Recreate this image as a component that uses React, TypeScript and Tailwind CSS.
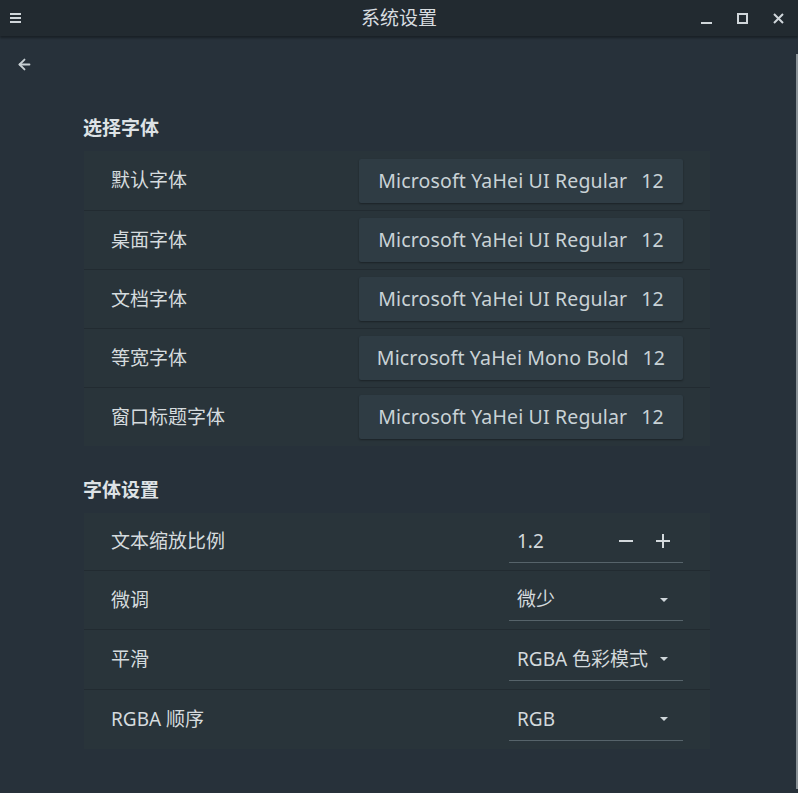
import { ArrowLeft } from "lucide-react";

const fontRows = [
  { label: "默认字体", value: "Microsoft YaHei UI Regular", size: 12 },
  { label: "桌面字体", value: "Microsoft YaHei UI Regular", size: 12 },
  { label: "文档字体", value: "Microsoft YaHei UI Regular", size: 12 },
  { label: "等宽字体", value: "Microsoft YaHei Mono Bold", size: 12 },
  { label: "窗口标题字体", value: "Microsoft YaHei UI Regular", size: 12 },
];

const font = "font-['Noto_Sans','Noto_Sans_CJK_SC',sans-serif]";

function Caret() {
  return (
    <svg width="10" height="6" viewBox="0 0 10 6" className="shrink-0">
      <path d="M1 1h8L5 5z" fill="#cfd6da" />
    </svg>
  );
}

function Select({ value }: { value: string }) {
  return (
    <div className="w-[174px] h-[42px] flex items-center justify-between pl-[8px] pr-[14px] border-b border-[#56636a] text-[19px] text-[#d3d9dc]">
      <span>{value}</span>
      <Caret />
    </div>
  );
}

export default function App() {
  return (
    <div className={`w-[798px] h-[793px] bg-[#27313a] flex flex-col overflow-hidden ${font}`}>
      {/* title bar */}
      <div className="h-[36px] shrink-0 bg-[#222a30] shadow-[0_2px_2px_rgba(0,0,0,0.35)] grid grid-cols-[1fr_auto_1fr] items-center relative z-10">
        <div className="pl-[10px]">
          <svg width="11" height="10" viewBox="0 0 11 10">
            <path d="M0 1h11M0 5h11M0 9h11" stroke="#d0d6da" strokeWidth="2" />
          </svg>
        </div>
        <div className="text-[19px] text-[#d8dde0]">系统设置</div>
        <div className="flex items-center justify-end pr-[2px]">
          <div className="w-[36px] h-[36px] flex items-center justify-center">
            <svg width="11" height="12" viewBox="0 0 11 12">
              <path d="M0 11h11" stroke="#d0d6da" strokeWidth="2" />
            </svg>
          </div>
          <div className="w-[36px] h-[36px] flex items-center justify-center">
            <svg width="11" height="11" viewBox="0 0 11 11">
              <rect x="1" y="1" width="9" height="9" fill="none" stroke="#d0d6da" strokeWidth="2" />
            </svg>
          </div>
          <div className="w-[36px] h-[36px] flex items-center justify-center">
            <svg width="11" height="11" viewBox="0 0 11 11">
              <path d="M1 1l9 9M10 1l-9 9" stroke="#d0d6da" strokeWidth="2" />
            </svg>
          </div>
        </div>
      </div>

      {/* body */}
      <div className="flex-1 relative">
        <div className="h-[56px] flex items-center pl-[16px]">
          <ArrowLeft size={17} strokeWidth={2.6} color="#c9d1d5" />
        </div>

        <div className="ml-[84px] w-[626px]">
          <h2 className="mt-[23px] h-[26px] leading-[26px] -ml-[1px] text-[19px] font-bold text-[#dde2e5]">选择字体</h2>
          <div className="mt-[10px] bg-[#29343a]">
            {fontRows.map((r, i) => (
              <div
                key={r.label}
                className={`h-[59px] flex items-center justify-between pl-[27px] pr-[27px] ${i > 0 ? "border-t border-[#222b31]" : ""}`}
              >
                <span className="text-[19px] text-[#d5dbde]">{r.label}</span>
                <div className="w-[324px] h-[44px] bg-[#2f3c44] rounded-[2px] shadow-[0_1px_2px_rgba(0,0,0,0.35)] flex items-center justify-center text-[19.5px] text-[#c9d2d6] tracking-[0.15px]">
                  {r.value}
                  <span className="ml-[14px]">{r.size}</span>
                </div>
              </div>
            ))}
          </div>

          <h2 className="mt-[31px] h-[26px] leading-[26px] -ml-[1px] text-[19px] font-bold text-[#dde2e5]">字体设置</h2>
          <div className="mt-[10px] bg-[#29343a]">
            <div className="h-[57px] flex items-center justify-between pl-[27px] pr-[27px]">
              <span className="text-[19px] text-[#d5dbde]">文本缩放比例</span>
              <div className="w-[174px] h-[42px] flex items-center pl-[8px] border-b border-[#56636a] text-[19px] text-[#d3d9dc]">
                <span className="flex-1">1.2</span>
                <svg width="14" height="14" viewBox="0 0 14 14" className="mr-[23px]">
                  <path d="M0 7h14" stroke="#d3d9dc" strokeWidth="2" />
                </svg>
                <svg width="14" height="14" viewBox="0 0 14 14" className="mr-[13px]">
                  <path d="M0 7h14M7 0v14" stroke="#d3d9dc" strokeWidth="2" />
                </svg>
              </div>
            </div>
            <div className="h-[59px] flex items-center justify-between pl-[27px] pr-[27px] border-t border-[#222b31]">
              <span className="text-[19px] text-[#d5dbde]">微调</span>
              <Select value="微少" />
            </div>
            <div className="h-[60px] flex items-center justify-between pl-[27px] pr-[27px] border-t border-[#222b31]">
              <span className="text-[19px] text-[#d5dbde]">平滑</span>
              <Select value="RGBA 色彩模式" />
            </div>
            <div className="h-[60px] flex items-center justify-between pl-[27px] pr-[27px] border-t border-[#222b31]">
              <span className="text-[19px] text-[#d5dbde]">RGBA 顺序</span>
              <Select value="RGB" />
            </div>
          </div>
        </div>
        <div className="absolute right-0 top-[18px] bottom-[4px] w-[2px] bg-[#8a9297]" />
      </div>
    </div>
  );
}
